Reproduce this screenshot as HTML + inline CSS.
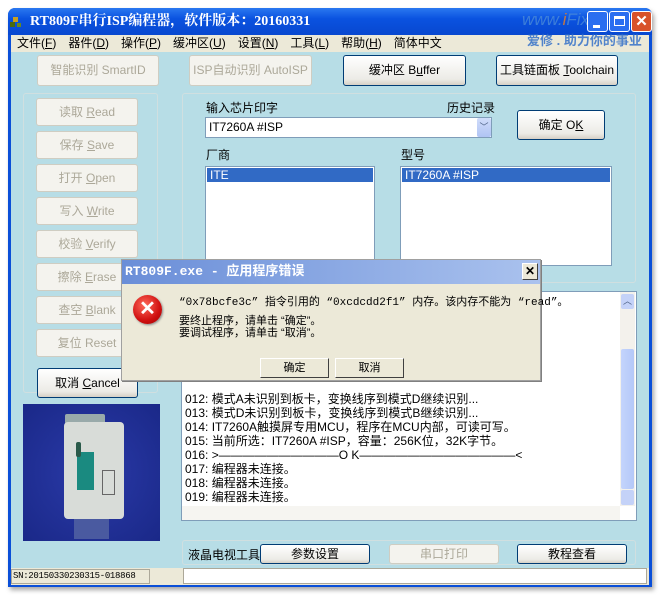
<!DOCTYPE html>
<html><head><meta charset="utf-8"><style>
*{box-sizing:border-box;margin:0;padding:0}
body{width:665px;height:600px;background:#fff;position:relative;overflow:hidden;font-family:"Liberation Sans","Noto Sans CJK SC",sans-serif;font-size:12px;color:#000}
.a{position:absolute;white-space:nowrap}
.win{left:8px;top:8px;width:644px;height:579px;background:#0a4fd8;border-radius:7px 7px 0 0;box-shadow:2px 3px 5px rgba(0,0,0,.35)}
.title{left:8px;top:8px;width:644px;height:27px;border-radius:7px 7px 0 0;background:linear-gradient(#2a78f0,#0a52e0 40%,#0848d0);color:#fff;font-family:"Liberation Serif","Noto Serif CJK SC",serif;font-weight:bold;font-size:14px;line-height:27px;padding-left:22px}
.menu{left:11px;top:35px;width:638px;height:17px;background:#ece9d8;font-size:12px;line-height:17px}
.menu span{margin-left:6px;margin-right:6px}
.body{left:11px;top:52px;width:638px;height:516px;background:#b7dde6}
.btn{position:absolute;background:linear-gradient(#fff,#ecebe6 80%,#d6d0c5);border:1px solid #003c74;border-radius:3px;text-align:center;font-size:12px;white-space:nowrap}
.dis{position:absolute;background:#f4f3ee;border:1px solid #cfcdc2;border-radius:3px;text-align:center;color:#aca899;font-size:12px;white-space:nowrap}
.grp{position:absolute;border:1px solid #d0dfe0;border-radius:3px}
.list{position:absolute;background:#fff;border:1px solid #7f9db9}
.sel{background:#316ac5;color:#fff;height:14px;line-height:14px;padding-left:3px;margin:1px}
.log div{height:14px;line-height:14px;white-space:nowrap}
</style></head><body>
<div class="a win"></div>
<div class="a title">RT809F串行ISP编程器，软件版本：20160331</div>
<div class="a" style="left:13px;top:17px;width:5px;height:5px;background:#c8a020"></div>
<div class="a" style="left:10px;top:22px;width:5px;height:5px;background:#4a6a10"></div>
<div class="a" style="left:17px;top:23px;width:4px;height:4px;background:#6a8a20"></div>
<div class="a" style="left:522px;top:10px;color:#4a8ad8;font-style:italic;font-size:17px;opacity:.8">www.<span style="color:#f08020">i</span>Fix</div>
<div class="a menu"><span>文件(<u>F</u>)</span><span>器件(<u>D</u>)</span><span>操作(<u>P</u>)</span><span>缓冲区(<u>U</u>)</span><span>设置(<u>N</u>)</span><span>工具(<u>L</u>)</span><span>帮助(<u>H</u>)</span><span>简体中文</span></div>
<div class="a" style="left:527px;top:30px;color:#2a6ac8;font-size:13px;font-weight:bold;opacity:.8">爱修 . 助力你的事业</div>
<div class="a" style="left:587px;top:11px;width:21px;height:21px;border:1px solid #fff;border-radius:3px;background:#2a6ef0"><div class="a" style="left:5px;top:13px;width:7px;height:3px;background:#fff"></div></div>
<div class="a" style="left:609px;top:11px;width:21px;height:21px;border:1px solid #fff;border-radius:3px;background:#2a6ef0"><div class="a" style="left:4px;top:4px;width:11px;height:10px;border:1px solid #fff;border-top-width:3px"></div></div>
<div class="a" style="left:631px;top:11px;width:21px;height:21px;border:1px solid #fff;border-radius:3px;background:#d8522a;color:#fff;font-weight:bold;font-size:15px;text-align:center;line-height:19px">✕</div>
<div class="a body"></div>

<div class="dis" style="left:37px;top:55px;width:122px;height:31px;line-height:29px">智能识别 SmartID</div>
<div class="dis" style="left:189px;top:55px;width:123px;height:31px;line-height:29px">ISP自动识别 AutoISP</div>
<div class="btn" style="left:343px;top:55px;width:123px;height:31px;line-height:29px">缓冲区 B<u>u</u>ffer</div>
<div class="btn" style="left:496px;top:55px;width:122px;height:31px;line-height:29px">工具链面板 <u>T</u>oolchain</div>

<div class="grp" style="left:23px;top:93px;width:135px;height:300px"></div>
<div class="dis" style="left:36px;top:98px;width:102px;height:28px;line-height:26px">读取 <u>R</u>ead</div>
<div class="dis" style="left:36px;top:131px;width:102px;height:28px;line-height:26px">保存 <u>S</u>ave</div>
<div class="dis" style="left:36px;top:164px;width:102px;height:28px;line-height:26px">打开 <u>O</u>pen</div>
<div class="dis" style="left:36px;top:197px;width:102px;height:28px;line-height:26px">写入 <u>W</u>rite</div>
<div class="dis" style="left:36px;top:230px;width:102px;height:28px;line-height:26px">校验 <u>V</u>erify</div>
<div class="dis" style="left:36px;top:263px;width:102px;height:28px;line-height:26px">擦除 <u>E</u>rase</div>
<div class="dis" style="left:36px;top:296px;width:102px;height:28px;line-height:26px">查空 <u>B</u>lank</div>
<div class="dis" style="left:36px;top:329px;width:102px;height:28px;line-height:26px">复位 Reset</div>
<div class="btn" style="left:37px;top:368px;width:101px;height:30px;line-height:28px">取消 <u>C</u>ancel</div>

<div class="a" style="left:23px;top:404px;width:137px;height:137px;background:radial-gradient(#2a3aa8,#1a2888)"></div>
<div class="a" style="left:65px;top:414px;width:40px;height:10px;background:#9aa;border-radius:2px"></div>
<div class="a" style="left:64px;top:422px;width:60px;height:97px;background:#d8dcd8;border-radius:4px"></div>
<div class="a" style="left:77px;top:452px;width:17px;height:38px;background:#1a8a80"></div>
<div class="a" style="left:76px;top:442px;width:5px;height:15px;background:#2a5a4a;border-radius:2px"></div>
<div class="a" style="left:102px;top:470px;width:13px;height:25px;border:1px solid #666"></div>
<div class="a" style="left:74px;top:519px;width:35px;height:20px;background:#4a5aa0"></div>

<div class="grp" style="left:182px;top:93px;width:454px;height:190px"></div>
<div class="a" style="left:206px;top:99px">输入芯片印字</div>
<div class="a" style="left:447px;top:99px">历史记录</div>
<div class="list" style="left:205px;top:117px;width:287px;height:21px;line-height:19px;padding-left:3px">IT7260A #ISP</div>
<div class="a" style="left:477px;top:118px;width:14px;height:19px;background:linear-gradient(#d0dcfa,#b0c4f4);border-radius:2px;text-align:center;color:#4d6185;font-size:9px;line-height:19px">﹀</div>
<div class="btn" style="left:517px;top:110px;width:88px;height:30px;line-height:28px">确定 O<u>K</u></div>
<div class="a" style="left:206px;top:146px">厂商</div>
<div class="a" style="left:401px;top:146px">型号</div>
<div class="list" style="left:205px;top:166px;width:170px;height:100px"><div class="sel">ITE</div></div>
<div class="list" style="left:400px;top:166px;width:212px;height:100px"><div class="sel">IT7260A #ISP</div></div>

<div class="list log" style="left:181px;top:291px;width:456px;height:230px;padding:100px 0 0 3px">
<div>012: 模式A未识别到板卡，变换线序到模式D继续识别...</div>
<div>013: 模式D未识别到板卡，变换线序到模式B继续识别...</div>
<div>014: IT7260A触摸屏专用MCU，程序在MCU内部，可读可写。</div>
<div>015: 当前所选：IT7260A #ISP，容量：256K位，32K字节。</div>
<div>016: &gt;——————————O K—————————————&lt;</div>
<div>017: 编程器未连接。</div>
<div>018: 编程器未连接。</div>
<div>019: 编程器未连接。</div>
</div>
<div class="a" style="left:620px;top:292px;width:15px;height:214px;background:#f3f1ec"></div>
<div class="a" style="left:621px;top:294px;width:13px;height:15px;background:#c4d2f8;border-radius:2px;text-align:center;font-size:9px;color:#4d6185">︿</div>
<div class="a" style="left:621px;top:349px;width:13px;height:140px;background:linear-gradient(90deg,#c4d4fc,#b4c8f8);border-radius:2px"></div>
<div class="a" style="left:621px;top:490px;width:13px;height:15px;background:#c4d2f8;border-radius:2px"></div>
<div class="a" style="left:182px;top:506px;width:438px;height:14px;background:#f6f5f1"></div>

<div class="grp" style="left:182px;top:540px;width:454px;height:25px"></div>
<div class="a" style="left:188px;top:546px">液晶电视工具</div>
<div class="btn" style="left:260px;top:544px;width:110px;height:20px;line-height:18px">参数设置</div>
<div class="dis" style="left:389px;top:544px;width:110px;height:20px;line-height:18px">串口打印</div>
<div class="btn" style="left:517px;top:544px;width:110px;height:20px;line-height:18px">教程查看</div>

<div class="a" style="left:11px;top:568px;width:638px;height:17px;background:#ece9d8"></div>
<div class="a" style="left:11px;top:569px;width:139px;height:15px;border:1px solid #aca899;font-family:'Liberation Mono','Noto Sans CJK SC',monospace;font-size:9px;letter-spacing:-0.3px;line-height:13px;padding-left:1px;overflow:hidden">SN:20150330230315-018868</div>
<div class="a" style="left:183px;top:568px;width:464px;height:16px;background:#fff;border:1px solid #aca899"></div>

<!-- dialog -->
<div class="a" style="left:121px;top:259px;width:420px;height:122px;background:#ece9d8;border:1px solid #a0a0a0;box-shadow:1px 1px 0 #808080"></div>
<div class="a" style="left:122px;top:260px;width:418px;height:24px;background:linear-gradient(90deg,#6a8ed8,#aac2ee);color:#fff;font-family:'Liberation Mono','Noto Sans CJK SC',monospace;font-weight:bold;font-size:13px;line-height:24px;padding-left:3px">RT809F.exe - 应用程序错误</div>
<div class="a" style="left:522px;top:263px;width:16px;height:17px;background:#ece9d8;border:1px solid #fff;border-right-color:#404040;border-bottom-color:#404040;text-align:center;font-weight:bold;font-size:12px;line-height:14px">✕</div>
<div class="a" style="left:133px;top:295px;width:29px;height:29px;border-radius:50%;background:radial-gradient(circle at 40% 35%,#ff6a5a,#d01010 60%,#900);box-shadow:1px 1px 2px #888;color:#fff;font-weight:bold;font-size:20px;text-align:center;line-height:28px">✕</div>
<div class="a" style="left:179px;top:293px;font-size:11px;font-family:'Liberation Mono','Noto Sans CJK SC',monospace">“0x78bcfe3c” 指令引用的 “0xcdcdd2f1” 内存。该内存不能为 “read”。</div>
<div class="a" style="left:179px;top:315px;font-size:11px;line-height:12px">要终止程序，请单击 “确定”。<br>要调试程序，请单击 “取消”。</div>
<div class="a" style="left:260px;top:358px;width:69px;height:20px;background:#ece9d8;border:1px solid #fff;border-right-color:#404040;border-bottom-color:#404040;text-align:center;line-height:18px;font-size:11px">确定</div>
<div class="a" style="left:335px;top:358px;width:69px;height:20px;background:#ece9d8;border:1px solid #fff;border-right-color:#404040;border-bottom-color:#404040;text-align:center;line-height:18px;font-size:11px">取消</div>
</body></html>
